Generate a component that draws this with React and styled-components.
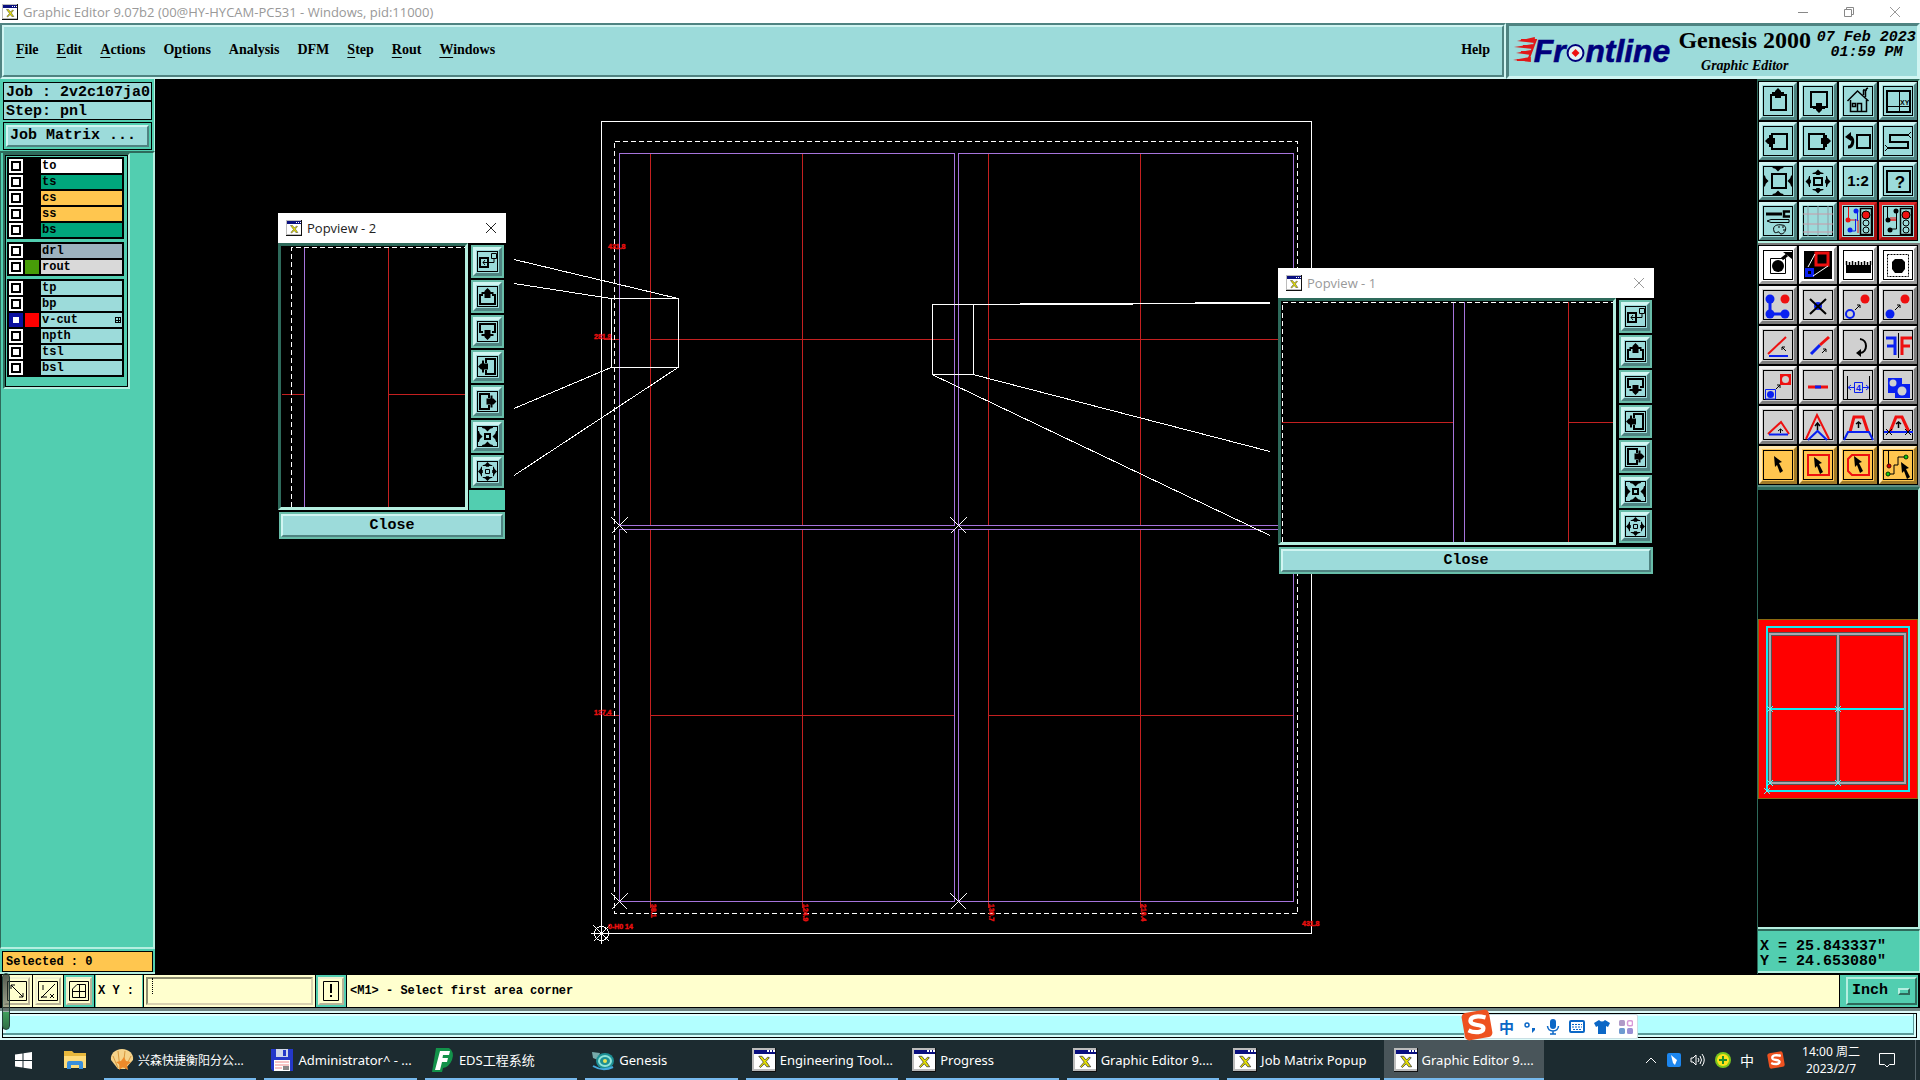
import React from "react";
import styled, { createGlobalStyle, css } from "styled-components";

const c = {
  teal: "#9cdbda",
  tealLight: "#d0f5f2",
  tealDark: "#4f8381",
  green: "#52ceb0",
  greenLight: "#b5efe0",
  greenDark: "#2e6a5b",
  cream: "#ffffce",
  amber: "#ffc64f",
  violet: "#a674dc",
  red: "#c42020",
  bar: "#1c2b30",
};
const mono = '"Liberation Mono", monospace';
const serif = '"Liberation Serif", serif';
const title = '"Open Sans", "Noto Sans", sans-serif';
const sans = '"Noto Sans", "Noto Sans CJK SC", sans-serif';

const Global = createGlobalStyle`
  *, *::before, *::after { box-sizing: border-box; }
  html, body { margin: 0; height: 100%; background: #000; overflow: hidden; }
  button, input, select { font: inherit; color: inherit; margin: 0; padding: 0; border: 0; border-radius: 0; background: none; }
  svg { display: block; }
`;

const raised = (w, light, dark) => css`
  border-style: solid;
  border-width: ${w}px;
  border-color: ${light} ${dark} ${dark} ${light};
`;

const Screen = styled.div`
  position: relative;
  display: grid;
  grid-template-rows: 23px 56px minmax(0, 1fr) 34px 32px 40px;
  height: 100vh;
  font-family: ${mono};
  color: #000;
`;

/* ---------- title bar ---------- */
const TitleBar = styled.header`
  display: flex;
  align-items: center;
  gap: 5px;
  padding: 0 19px 0 2px;
  background: #fff;
  color: #999;
  font: 13px/22px ${title};
`;
const Grow = styled.span`
  flex: 1;
`;
const WinButtons = styled.div`
  display: flex;
  gap: 34px;
`;
const Plain = styled.button`
  display: flex;
  align-items: center;
  justify-content: center;
`;

/* ---------- menu ---------- */
const TopRow = styled.div`
  display: flex;
  background: ${c.teal};
`;
const MenuFrame = styled.nav`
  flex: 1;
  display: flex;
  ${raised(2, c.tealDark, c.tealLight)}
`;
const MenuInner = styled.div`
  flex: 1;
  display: flex;
  align-items: center;
  gap: 18px;
  padding: 0 12px 2px 12px;
  ${raised(2, c.tealLight, c.tealDark)}
`;
const MenuItem = styled.button`
  font: bold 14px/20px ${serif};
  u { text-underline-offset: 3px; text-decoration-thickness: 1px; }
`;
const Brand = styled.div`
  width: 414px;
  display: flex;
  gap: 4px;
  padding-left: 4px;
  border-style: solid;
  border-width: 3px;
  border-color: ${c.tealDark} ${c.tealLight} ${c.tealLight} ${c.tealDark};
`;
const Product = styled.div`
  width: 135px;
  text-align: center;
  white-space: nowrap;
  font: bold 24px/28px ${serif};
  em { display: block; font-size: 14px; line-height: 24px; }
`;
const Clock = styled.time`
  width: 102px;
  text-align: center;
  font: italic bold 15px/15px ${mono};
  padding-top: 4px;
  white-space: nowrap;
`;

/* ---------- main area ---------- */
const Main = styled.main`
  display: flex;
  min-height: 0;
`;
const Sidebar = styled.aside`
  width: 155px;
  display: flex;
  flex-direction: column;
  background: ${c.green};
  border-bottom: 2px solid ${c.greenLight};
`;
const JobInfo = styled.div`
  padding: 3px 2px 1px 3px;
  border-right: 1px solid ${c.greenLight};
`;
const JobLine = styled.div`
  height: 19px;
  padding-left: 2px;
  border: 1px solid #000;
  background: ${c.teal};
  font: bold 15px/19px ${mono};
  white-space: pre;
`;
const MatrixFrame = styled.div`
  margin-top: 2px;
  padding: 2px;
  border: 1px solid #000;
`;
const MatrixButton = styled.button`
  width: 100%;
  height: 22px;
  padding-left: 2px;
  text-align: left;
  background: ${c.teal};
  font: bold 15px/18px ${mono};
  ${raised(2, c.tealLight, c.tealDark)}
`;
const LayerArea = styled.div`
  flex: 1;
  padding-left: 2px;
  border-right: 2px solid ${c.greenLight};
  border-bottom: 2px solid ${c.greenLight};
  border-left: 1px solid ${c.greenDark};
  border-top: 2px solid ${c.greenDark};
`;
const LayerBox = styled.div`
  width: 127px;
  ${raised(2, c.greenDark, c.greenLight)}
`;
const LayerList = styled.div`
  display: flex;
  flex-direction: column;
  gap: 3px;
  padding: 1px 3px 9px 1px;
  border: 1px solid #000;
`;
const LayerGroup = styled.div`
  padding: 1px;
  background: #000;
`;
const LayerRow = styled.div`
  display: grid;
  grid-template-columns: 14px 14px 1fr;
  column-gap: 2px;
  height: 16px;
  padding: 1px;
`;
const Tick = styled.input`
  appearance: none;
  width: 14px;
  height: 14px;
  border: 2px solid ${(p) => (p.$active ? "#0c10a0" : "#fff")};
  background: #fff;
  box-shadow: inset 0 0 0 2px ${(p) => (p.$active ? "#0c10a0" : "#000")};
`;
const Swatch = styled.span`
  background: ${(p) => p.$color || "#000"};
`;
const LayerName = styled.label`
  display: flex;
  align-items: center;
  justify-content: space-between;
  padding: 0 1px;
  background: ${(p) => p.$color};
  font: bold 12px/14px ${mono};
`;
const Selected = styled.div`
  height: 21px;
  margin: 2px 2px 0;
  padding-left: 3px;
  border: 1px solid #000;
  background: ${c.amber};
  font: bold 12px/20px ${mono};
`;

const Canvas = styled.section`
  position: relative;
  flex: 1;
  min-width: 0;
  background: #000;
  overflow: hidden;
  > svg { width: 100%; height: 100%; }
`;

/* ---------- pop-up views ---------- */
const Popup = styled.div`
  position: absolute;
  left: ${(p) => p.$x}px;
  top: ${(p) => p.$y}px;
  width: ${(p) => p.$w}px;
  background: #000;
`;
const PopTitle = styled.div`
  display: flex;
  align-items: center;
  gap: 5px;
  height: 30px;
  padding: 0 9px 0 8px;
  background: #fff;
  color: ${(p) => (p.$dim ? "#999" : "#222")};
  font: 13px/28px ${title};
`;
const PopBody = styled.div`
  display: flex;
  gap: 1px;
  padding-right: 1px;
`;
const PopView = styled.div`
  flex: 1;
  ${raised(3, c.greenDark, c.greenLight)}
  svg { width: 100%; height: 100%; }
`;
const PopTools = styled.div`
  width: 36px;
  display: flex;
  flex-direction: column;
  align-items: center;
  gap: 2px;
  padding-top: 2px;
`;
const PopTool = styled.button`
  width: 33px;
  height: 33px;
  background: ${c.teal};
  border: 2px solid #68bda9;
  > span { display: block; ${raised(3, c.tealLight, c.tealDark)} }
`;
const PopFill = styled.span`
  flex: 1;
  align-self: stretch;
  background: ${c.green};
`;
const CloseFrame = styled.div`
  margin: 2px 1px 0;
  padding: 2px;
  background: #68bda9;
`;
const CloseButton = styled.button`
  display: block;
  width: 100%;
  height: 23px;
  background: ${c.teal};
  font: bold 15px/19px ${mono};
  ${raised(2, c.tealLight, c.tealDark)}
`;

/* ---------- right column ---------- */
const RightCol = styled.aside`
  width: 163px;
  display: flex;
  flex-direction: column;
  background: #000;
  border-left: 1px solid ${c.greenDark};
`;
const ToolPanel = styled.div`
  display: grid;
  grid-template-columns: repeat(4, 40px);
  grid-auto-rows: 40px;
  background: #000;
  border-top: 2px solid ${(p) => (p.$grey ? "#777" : c.greenDark)};
  border-right: 2px solid ${(p) => (p.$grey ? "#888" : c.greenLight)};
  border-bottom: 2px solid ${(p) => (p.$grey ? "#5d8f84" : c.greenLight)};
`;
const kinds = {
  teal: [c.teal, c.tealLight, c.tealDark],
  red: [c.teal, "#e02a2a", "#a31212"],
  white: ["#fff", "#fff", "#9a9a9a"],
  grey: ["#d0d0d0", "#f2f2f2", "#7d7d7d"],
  amber: [c.amber, "#ffe7b0", "#a07a28"],
};
const Tool = styled.button`
  width: 38px;
  height: 38px;
  margin: 1px;
  background: ${(p) => kinds[p.$kind][0]};
  border-style: solid;
  border-width: 3px;
  border-color: ${(p) => {
    const [, l, d] = kinds[p.$kind];
    return `${l} ${d} ${d} ${l}`;
  }};
`;
const MiniMap = styled.div`
  flex: 1;
  display: flex;
  align-items: center;
  border-style: solid;
  border-width: 3px 2px 2px 0;
  border-color: ${c.greenDark} ${c.greenLight} ${c.greenLight};
  svg { width: 100%; }
`;
const Coords = styled.div`
  height: 44px;
  margin-bottom: 1px;
  padding: 8px 2px 0;
  background: ${c.green};
  border-top: 2px solid ${c.greenDark};
  border-right: 1px solid ${c.greenLight};
  border-bottom: 2px solid ${c.greenLight};
  font: bold 15px/15px ${mono};
  white-space: pre;
`;

/* ---------- command line ---------- */
const Command = styled.form`
  display: flex;
  gap: 1px;
  padding: 1px 2px 1px 2px;
  font: bold 12px/33px ${mono};
`;
const CmdButton = styled.button`
  width: 30px;
  padding: 2px;
  background: ${(p) => (p.$framed ? c.green : c.cream)};
  > span {
    display: flex;
    align-items: center;
    justify-content: center;
    height: 28px;
    background: ${c.cream};
    ${raised(2, "#f0f0d0", "#b9b398")}
  }
`;
const CmdLabel = styled.label`
  width: 48px;
  padding-left: 2px;
  background: ${c.cream};
  border-left: 1px solid ${c.green};
  border-right: 1px solid ${c.green};
  white-space: pre;
`;
const CmdField = styled.div`
  width: 171px;
  padding: 2px;
  background: ${c.cream};
`;
const CmdInput = styled.input`
  display: block;
  width: 100%;
  height: 28px;
  padding-left: 5px;
  ${raised(2, "#8d8d70", "#d9d2b0")}
`;
const Caret = styled.span`
  position: absolute;
  left: 152px;
  bottom: 86px;
  height: 16px;
  border-left: 1px dotted #000;
`;
const Message = styled.output`
  flex: 1;
  padding-left: 3px;
  background: ${c.cream};
`;
const UnitBox = styled.div`
  display: flex;
  width: 78px;
  padding: 2px 1px 2px 6px;
  background: ${c.green};
`;
const UnitInner = styled.div`
  flex: 1;
  display: flex;
  align-items: center;
  gap: 2px;
  padding-left: 4px;
  ${raised(2, c.greenLight, c.greenDark)}
`;
const UnitSelect = styled.select`
  appearance: none;
  width: 44px;
  font: bold 15px/20px ${mono};
`;
const UnitMark = styled.span`
  width: 12px;
  height: 7px;
  ${raised(2, c.greenLight, c.greenDark)}
`;

const Strip = styled.div`
  padding: 2px 3px 2px 2px;
  background: #dffcfa;
  border-top: 3px solid #6f8583;
`;
const StripInner = styled.div`
  height: 100%;
  border: 1px solid #000;
  background: #b2ffff;
  box-shadow: inset -2px 0 0 #d8fffc, inset 0 -2px 0 #d8fffc, inset -3px -4px 0 #5b9a98, inset 3px 2px 0 #e0ffff;
`;
const Gauge = styled.div`
  position: absolute;
  left: 2px;
  bottom: 50px;
  width: 8px;
  height: 57px;
  border: 1px solid #24413a;
  border-radius: 4px;
  background: linear-gradient(rgba(30, 40, 36, 0.75), rgba(90, 100, 90, 0.5) 38px, #3f9f5c 38px, #2f6f45);
`;

/* ---------- input method bar ---------- */
const Ime = styled.div`
  position: absolute;
  right: 282px;
  bottom: 41px;
  width: 174px;
  height: 25px;
  display: flex;
  align-items: center;
  gap: 9px;
  padding-left: 34px;
  background: #fff;
  border: 1px solid #c9dfe4;
  border-radius: 2px;
  color: #0b67c6;
  font: bold 15px/22px "Noto Sans CJK SC", sans-serif;
`;
const ImeLogo = styled.span`
  position: absolute;
  left: -4px;
  bottom: -3px;
`;

/* ---------- taskbar ---------- */
const Taskbar = styled.footer`
  display: flex;
  align-items: stretch;
  background: ${c.bar};
  color: #fff;
  font: 13px/39px ${sans};
`;
const Launch = styled.div`
  width: 100px;
  display: flex;
  align-items: center;
  gap: 32px;
  padding-left: 15px;
`;
const Tasks = styled.div`
  flex: 0 1 1444px;
  display: grid;
  grid-template-columns: repeat(9, minmax(0, 1fr));
`;
const Task = styled.button`
  position: relative;
  display: flex;
  align-items: center;
  gap: 4px;
  padding-left: 10px;
  white-space: nowrap;
  font-size: ${(p) => (p.$compact ? 12 : 13)}px;
  background: ${(p) => (p.$active ? "#49555a" : "transparent")};
  &::after {
    content: "";
    position: absolute;
    left: ${(p) => (p.$active ? 0 : 4)}px;
    right: ${(p) => (p.$active ? 0 : 4)}px;
    bottom: 0;
    height: 2px;
    background: #76b9ed;
  }
`;
const Tray = styled.div`
  flex: 1;
  display: flex;
  align-items: center;
  justify-content: flex-end;
  gap: 9px;
  padding-right: 20px;
  border-right: 1px solid #55636a;
  margin-right: 4px;
`;
const TrayText = styled.span`
  margin-right: 4px;
  font: 14px/20px "Noto Sans CJK SC", sans-serif;
`;
const DateTime = styled.time`
  width: 74px;
  margin-right: 2px;
  text-align: center;
  font: 12px/17px ${sans};
`;

/* ---------- icons ---------- */
function AppIcon({ size = 16 }) {
  return (
    <svg width={size} height={size} viewBox="0 0 16 16" shapeRendering="crispEdges">
      <rect width="16" height="16" fill="#111" />
      <rect width="15" height="15" fill="#bcbcbc" />
      <rect x="1" y="1" width="14" height="3" fill="#0a1080" />
      <path d="M10 2h1M12 2h1M14 2h1" stroke="#fff" />
      <rect x="1" y="4" width="14" height="10" fill="#fff" />
      <path d="M4.500 5.500h2l2 2.500 2-2 1 .5-2.200 2.500 2.500 3.500h-2l-1.600-2-2.500 2.500-.8-.6 2.600-3z" fill="#e8e200" stroke="#333" strokeWidth=".5" shapeRendering="auto" />
    </svg>
  );
}

const Head = ({ x, y, r = 0, s = 1 }) => (
  <path d="M0-5L3-2L6-1V0H2V1H-2V0H-6V-1L-3-2z" fill="#000" transform={`translate(${x} ${y}) rotate(${r}) scale(${s})`} />
);
const Arrow = ({ x, y, r = 0 }) => (
  <path d="M0-5L3-2V-1H6V1H3V5H-3V1H-6V-1H-3V-2z" fill="#000" transform={`translate(${x} ${y}) rotate(${r})`} />
);
const line = (d, stroke = "#000", w = 2) => <path d={d} stroke={stroke} strokeWidth={w} fill="none" />;
const B = "#0a20f0";
const R = "#ee1010";
const pointer = (x, y) => (
  <path d="M0 0L8 6 5 7 9 15 6 17 3 9 1 11z" fill="#000" transform={`translate(${x} ${y})`} />
);

const lights = (
  <>
    {line("M18.500 3.500H29.500V29.500H18.500z", "#000", 1.5)}
    <circle cx="24" cy="10" r="4" fill={R} stroke="#000" />
    <circle cx="24" cy="18" r="3" fill="none" stroke="#000" />
    <circle cx="24" cy="25" r="3" fill="none" stroke="#000" />
  </>
);

const icons = {
  up: <>{line("M9 10H24V25H9z")}<Arrow x={16} y={8} /></>,
  down: <>{line("M9 7H25V22H9z")}<Arrow x={17} y={23} r={180} /></>,
  home: (
    <>
      {line("M5.500 16L15.500 6L26.500 16M21.500 10V5M23.500 12V5M21 5H25M24 4L26 3", "#000", 1.5)}
      {line("M8.500 15V26.500H24.500V15M15.500 26V18.500H19.500V26M10.500 18.500H13.500V21.500H10.500z", "#000", 1.5)}
    </>
  ),
  xy: (
    <>
      {line("M5 6H28V27H5z")}
      {line("M17.500 6V27M5 21.500H28", "#000", 1)}
      <text x="18" y="20" fontSize="7" fontWeight="bold" fontFamily="Liberation Sans, sans-serif">XY</text>
    </>
  ),
  left: <>{line("M10 9H25V24H10z")}<Arrow x={8} y={16} r={270} /></>,
  right: <>{line("M7 9H22V24H7z")}<Arrow x={24} y={16} r={90} /></>,
  undo: <>{line("M15 10H28V23H15z")}{line("M6 12H8C12 12 12 22 6 22", "#000", 3)}<path d="M3 12L9 7V16z" /></>,
  snake: <>{line("M26 10H8V17H26V23H6")}{line("M26 10L29 7M26 10L29 13M6 23L3 20M6 23L3 26", "#000", 1)}</>,
  zin: <>{line("M10 9H24V23H10z")}<Head x={16} y={2} r={180} s={0.9} /><Head x={16} y={30} s={0.9} /><Head x={2} y={16} r={90} s={0.9} /><Head x={30} y={16} r={270} s={0.9} /></>,
  zout: <>{line("M12 13H20V20H12z")}<Head x={16} y={9} s={0.9} /><Head x={16} y={24} r={180} s={0.9} /><Head x={8} y={16.5} r={270} s={0.9} /><Head x={24} y={16.5} r={90} s={0.9} /></>,
  ratio: <text x="16" y="21" textAnchor="middle" fontSize="15" fontWeight="bold" fontFamily="Liberation Sans, sans-serif">1:2</text>,
  help: <>{line("M5 6H28V27H5z")}<text x="18" y="23" textAnchor="middle" fontSize="17" fontFamily="Liberation Sans, sans-serif" fontWeight="bold">?</text></>,
  setup: (
    <>
      {line("M4 9H20", "#000", 3)}
      {line("M28 6.500H22V11.500H28", "#000", 2.5)}
      {line("M5 16L9 14.500H27V17.500H9z", "#000", 1)}
      {line("M12 26C10 21 15 19 20 20C26 20 24 29 19 29C17 29 18 26 16 27C14 28 12 28 12 26M16 22h2M20 22h2M21 25h2", "#000", 1)}
    </>
  ),
  grid: <>{line("M6 1V31M16 1V31M26 1V31", "#8a9fa8", 1)}{line("M1 9H31M1 19H31M1 27H31", "#c99aa8", 1)}</>,
  light1: (
    <>
      {line("M6.500 2V15H16V28", R, 1)}{line("M15.500 6V16M9 26H13.500V14", B, 1)}
      <circle cx="6" cy="15" r="2.500" fill={R} /><circle cx="14" cy="6" r="2.500" fill={B} /><circle cx="8" cy="25" r="2.500" fill={B} />
      {lights}
    </>
  ),
  light2: (
    <>
      {line("M5.500 2V14M14.500 6V24H8", "#000", 1)}{line("M6 15H14M9 12V16M11 12V16M13 12V16", R, 1)}
      <circle cx="6" cy="15" r="2.500" /><circle cx="14" cy="6" r="2.500" /><circle cx="8" cy="25" r="2.500" />
      {lights}
    </>
  ),
  movePad: <>{line("M8.500 9.500H23.500V24.500H8.500z", "#000", 1)}<circle cx="16" cy="17" r="6" />{line("M20 10L25 6", "#000", 3)}<path d="M21 3H30V10z" /></>,
  resize: (
    <>
      <rect x="2" y="2" width="28" height="28" /><path d="M14 4H26V16H14z" stroke={R} strokeWidth="3" fill="none" />
      <path d="M4 20H11V27H4z" stroke={B} strokeWidth="2" fill={B} />{line("M6 18L13 5M11 27L26 17", "#fff", 1)}<rect x="6" y="22" width="3" height="3" />
    </>
  ),
  ruler: <><rect x="4" y="16" width="25" height="8" />{line("M4.500 12V16M7.500 13V16M10.500 12V16M13.500 13V16M16.500 12V16M19.500 13V16M22.500 12V16M25.500 13V16M28.500 12V16", "#000", 1.5)}</>,
  spot: <><path d="M5.500 5.500H26.500V27.500H5.500z" fill="none" stroke="#000" strokeDasharray="2 1" /><path d="M13 10H20L23 13V20L20 24H13L10 20V13z" /></>,
  nodes: <>{line("M8 10V25H23", B, 3)}<circle cx="8" cy="10" r="4.500" fill={B} /><circle cx="8" cy="25" r="4.500" fill={B} /><circle cx="23" cy="25" r="4.500" fill={B} /><circle cx="23" cy="10" r="4.500" fill={R} /></>,
  kill: <><circle cx="16" cy="17" r="4" fill={B} />{line("M8 10L24 25M24 10L8 25")}</>,
  copyTo: <><circle cx="8" cy="25" r="4" fill="none" stroke={B} strokeWidth="2" /><circle cx="23" cy="10" r="4.500" fill={R} />{line("M13 21L18 16M15 16H18V19", "#000", 1)}</>,
  moveTo: <><circle cx="8" cy="25" r="4.500" fill={B} /><circle cx="23" cy="10" r="4.500" fill={R} />{line("M13 21L18 16M15 16H18V19", "#000", 1)}</>,
  angle: <>{line("M6 25L24 8", R)}{line("M7 27H26", B)}{line("M24 22L20 18M20 21V18H23", "#000", 1)}</>,
  extend: <>{line("M9 25L18 16", B, 3)}{line("M18 16L27 8", R, 3)}{line("M20 24L24 20M21 20H24V23", "#000", 1)}</>,
  rotate: <>{line("M18 10C26 11 26 23 18 24")}<path d="M14 24L19 20V28z" /></>,
  mirror: <>{line("M4 9H13V26M13 17H5", B, 3)}{line("M30 9H20V26M20 17H28", R, 3)}{line("M16.500 4V29", "#000", 1)}</>,
  swap: <>{line("M3.500 20.500H13.500V30H3.500z", B, 1)}<circle cx="8.500" cy="25.500" r="3.500" fill={B} />{line("M14 20L18 16M15 16H18V19", "#000", 1)}<rect x="18" y="5" width="11" height="11" fill={R} /><circle cx="23.500" cy="10.500" r="3.500" fill="#d0d0d0" /></>,
  brk: <>{line("M6 18H26", R, 3)}{line("M13 18H19", B, 3)}</>,
  measure: <>{line("M5.500 7V30M27.500 7V30", "#000", 1)}{line("M12.500 13.500H20.500V23.500H12.500zM7 18.500H12M20 18.500H26M9 16L6 18.500L9 21M24 16L27 18.500L24 21", B, 1)}<text x="14" y="22" fontSize="9" fontWeight="bold" fill={B} fontFamily="Liberation Sans, sans-serif">4</text></>,
  merge: <><path d="M6 9H20V15H28V29H13V24H6z" fill={B} /><circle cx="11" cy="14" r="3.500" fill="#d0d0d0" /><circle cx="20" cy="22" r="4.500" fill="#d0d0d0" /></>,
  tri1: <>{line("M6 25L19 13L27 25", R)}{line("M7 25.500H26", B)}{line("M18.500 24V20M16 22L18.500 20L21 22", "#000", 1)}</>,
  tri2: <>{line("M4 30L15 6L27 30", R)}{line("M6 31L15.500 22L25 31", B)}{line("M15.500 21V14M13 17L15.500 14L18 17", "#000", 1.5)}</>,
  trap1: <>{line("M8 23L12 8H21L26 23", R, 3)}{line("M2 31L6 23H27L31 31", B)}{line("M16.500 19V13M14 15L16.500 13L19 15", "#000", 1.5)}</>,
  trap2: <>{line("M8 23L14 8H20L27 23", R, 3)}{line("M2 23H31", B)}{line("M16.500 19V13M14 15L16.500 13L19 15", "#000", 1.5)}{line("M4 20L10 26M10 20L4 26M23 20L29 26M29 20L23 26", "#000", 1)}</>,
  sel: pointer(12, 7),
  selRect: <>{line("M6 6H27V26H6z", R)}{pointer(12, 8)}</>,
  selPoly: <>{line("M10 6H27V26H10L6 22V10z", R)}{pointer(12, 7)}</>,
  selNet: (
    <>
      {line("M6.500 1V17M6 25H12V16H16V8H24", "#000", 1)}
      <circle cx="7" cy="17" r="2" fill="#c00" stroke="#500" /><circle cx="6" cy="25" r="2" fill="#1c1" stroke="#030" /><circle cx="24" cy="8" r="2" fill="#1c1" stroke="#030" />
      {pointer(19, 13)}
    </>
  ),
};
function ToolIcon({ name }) {
  return (
    <svg width="32" height="32" viewBox="0 0 32 32">
      {name !== "resize" && <path d="M1.500 1.500H30.500V30.500H1.500z" fill="none" stroke="#000" shapeRendering="crispEdges" />}
      {icons[name]}
    </svg>
  );
}
const upper = [
  ["up", "Pan up"], ["down", "Pan down"], ["home", "Home"], ["xy", "Zoom XY"],
  ["left", "Pan left"], ["right", "Pan right"], ["undo", "Previous view"], ["snake", "Serpentine"],
  ["zin", "Zoom in"], ["zout", "Zoom out"], ["ratio", "Scale"], ["help", "Query"],
  ["setup", "Setup"], ["grid", "Grid"], ["light1", "Net check", "red"], ["light2", "Net rules", "red"],
];
const lower = [
  ["movePad", "Move pad", "white"], ["resize", "Popview", "white"], ["ruler", "Measure", "white"], ["spot", "Snap", "white"],
  ["nodes", "Nodes"], ["kill", "Delete"], ["copyTo", "Copy"], ["moveTo", "Move"],
  ["angle", "Angle"], ["extend", "Extend"], ["rotate", "Rotate"], ["mirror", "Mirror"],
  ["swap", "Change symbol"], ["brk", "Break"], ["measure", "Distance"], ["merge", "Merge"],
  ["tri1", "Move line"], ["tri2", "Move corner"], ["trap1", "Stretch"], ["trap2", "Stretch fixed"],
  ["sel", "Select", "amber"], ["selRect", "Select frame", "amber"], ["selPoly", "Select polygon", "amber"], ["selNet", "Select net", "amber"],
];

const smallIcons = {
  pick: <>{line("M4 8H12V17H4z")}{line("M15.500 3.500H20.500V8.500H15.500zM7 12.500H18V8M9 10L7 12.500L9 15", "#000", 1)}</>,
  up: <>{line("M7 10H4V19H19V10H16")}<Arrow x={11.5} y={8} /></>,
  down: <>{line("M7 12H4V4H19V12H16")}<Arrow x={11.5} y={15} r={180} /></>,
  left: <>{line("M10 8V4H19V19H10V15")}<Arrow x={7} y={11.5} r={270} /></>,
  right: <>{line("M13 8V4H4V19H13V15")}<Arrow x={15.5} y={11.5} r={90} /></>,
  zin: <>{line("M9 9H14V14H9z")}<Head x={11.5} y={2} r={180} s={0.9} /><Head x={11.5} y={21} s={0.9} /><Head x={2} y={11.5} r={90} s={0.9} /><Head x={21} y={11.5} r={270} s={0.9} /></>,
  zout: <>{line("M9.500 9.500H13.500V13.500H9.500z", "#000", 1)}<Head x={11.5} y={6} s={0.8} /><Head x={11.5} y={17} r={180} s={0.8} /><Head x={6} y={11.5} r={270} s={0.8} /><Head x={17} y={11.5} r={90} s={0.8} /></>,
};

const CloseGlyph = () => (
  <svg width="12" height="12" viewBox="0 0 12 12"><path d="M1 1L11 11M11 1L1 11" stroke="currentColor" /></svg>
);

function PopWindow({ id, x, y, w, h, dim, drawing }) {
  return (
    <Popup $x={x} $y={y} $w={w} role="dialog" aria-label={`Popview - ${id}`}>
      <PopTitle $dim={dim}>
        <AppIcon />
        <span>Popview - {id}</span>
        <Grow />
        <Plain aria-label="Close window"><CloseGlyph /></Plain>
      </PopTitle>
      <PopBody>
        <PopView>
          <svg viewBox={`0 0 ${w - 44} ${h}`} shapeRendering="crispEdges">{drawing}</svg>
        </PopView>
        <PopTools>
          {Object.keys(smallIcons).map((k) => (
            <PopTool key={k} aria-label={k}>
              <span>
                <svg width="23" height="23" viewBox="0 0 23 23">
                  <path d="M1.500 1.500H21.500V21.500H1.500z" fill="none" stroke="#000" shapeRendering="crispEdges" />
                  {smallIcons[k]}
                </svg>
              </span>
            </PopTool>
          ))}
          {id === 2 && <PopFill />}
        </PopTools>
      </PopBody>
      <CloseFrame><CloseButton>Close</CloseButton></CloseFrame>
    </Popup>
  );
}

function Panel() {
  const v = { stroke: c.violet, fill: "none" };
  const r = { stroke: c.red, fill: "none" };
  const w = { stroke: "#fff", fill: "none" };
  const cross = (x, y) => <path d={`M${x - 8} ${y - 8}L${x + 8} ${y + 8}M${x + 8} ${y - 8}L${x - 8} ${y + 8}`} {...w} />;
  const tag = (x, y, t, rot) => (
    <text transform={`translate(${x} ${y})${rot ? " rotate(90)" : ""}`} fontSize="7" fontWeight="bold" fontFamily="Liberation Sans, sans-serif" fill="#ff1010" stroke="#e01010" strokeWidth=".4">{t}</text>
  );
  return (
    <svg viewBox="155 79 1602 895" shapeRendering="crispEdges">
      <path d="M650.500 153V525M650.500 529V908M802.500 153V525M802.500 529V908M988.500 153V525M988.500 529V908M1140.500 153V525M1140.500 529V908" {...r} />
      <path d="M650 339.500H954M988 339.500H1293M650 715.500H954M988 715.500H1293M604 339.500H619M604 715.500H619" {...r} />
      <path d="M619.500 153.500H954.500V525.500H619.500zM958.500 153.500H1293.500V525.500H958.500zM619.500 529.500H954.500V901.500H619.500zM958.500 529.500H1293.500V901.500H958.500z" {...v} />
      <path d="M601.500 121.500H1311.500V933.500H601.500z" {...w} />
      <path d="M614.500 141.500H1297.500V913.500H614.500z" strokeDasharray="5 3" {...w} />
      <path d="M611.500 298.500H678.500V367.500H611.500zM932.500 304.500H973.500V374.500H932.500z" {...w} />
      <path d="M514 259.500L678 298.500M514 283.500L611 298.500M514 408.500L611 367.500M514 475.500L678 367.500" {...w} />
      <path d="M973 304.500H1133M1020 303.500H1270M1195 302.500H1270M932 374.500L1270 535.500M973 374.500L1270 451.500" {...w} />
      {cross(619.5, 525.5)}{cross(958.5, 525.5)}{cross(619.5, 901.5)}{cross(958.5, 901.5)}
      {cross(601.5, 933.5)}
      <circle cx="601.500" cy="933.500" r="7" {...w} />
      <path d="M591 933.500H611M601.500 923V944" {...w} />
      {tag(608, 249, "431.8")}{tag(594, 339, "281.9")}{tag(594, 715, "137.4")}
      {tag(608, 929, "0-H0 14")}{tag(1302, 926, "431.8")}
      {tag(651, 904, "38.1", 1)}{tag(803, 904, "124.9", 1)}{tag(989, 904, "130.7", 1)}{tag(1141, 904, "216.4", 1)}
    </svg>
  );
}

const layers = [
  [["to", "#fff"], ["ts", "#00a67c"], ["cs", c.amber], ["ss", c.amber], ["bs", "#00a67c"]],
  [["drl", "#9db3be"], ["rout", "#d9d9d9", "#479c08"]],
  [["tp", c.teal], ["bp", c.teal], ["v-cut", c.teal, "#ff0000"], ["npth", c.teal], ["tsl", c.teal], ["bsl", c.teal]],
];

const menus = ["_File", "_Edit", "_Actions", "O_ptions", "Analysis", "DFM", "_Step", "_Rout", "_Windows"];
const MenuText = ({ t }) => {
  const i = t.indexOf("_");
  if (i < 0) return t;
  return <>{t.slice(0, i)}<u>{t[i + 1]}</u>{t.slice(i + 2)}</>;
};

function Logo() {
  return (
    <svg width="162" height="48" viewBox="0 0 162 48">
      <path d="M4 15L22 11V17zM1 21L20 18V23zM3 27L18 24V29zM0 34L18 31V36z" fill="#e01818" />
      <path d="M8 14H23L15 35M10 20H20M8 26H18M4 34H16" stroke="#e01818" strokeWidth="2" fill="none" />
      <g fill="#00007c" stroke="#00007c" strokeWidth=".6" fontFamily="Liberation Sans, sans-serif" fontWeight="bold" fontStyle="italic" fontSize="32">
        <text x="21" y="36">Fr</text>
        <text x="73" y="36">ntline</text>
      </g>
      <circle cx="63" cy="27" r="8" fill="#e4f4f4" stroke="#00007c" strokeWidth="2" />
      <path d="M63 23L67 27L63 31L59 27z" fill="#ee1010" />
    </svg>
  );
}

const SogouS = ({ size }) => (
  <svg width={size} height={size} viewBox="0 0 30 30">
    <rect x="2" y="2" width="26" height="26" rx="4" fill="#ee5220" transform="rotate(-10 15 15)" />
    <path d="M23 8C15 6 8 7 9 12C10 16 21 14 21 18C21 22 13 23 7 20" stroke="#fff" strokeWidth="4" fill="none" />
  </svg>
);

const taskIcons = {
  shell: (
    <svg width="24" height="24" viewBox="0 0 24 24">
      <path d="M12 1C19 1 24 6 23 12L15 21H8L1 12C0 6 5 1 12 1z" fill="#f6d389" />
      <path d="M8 20L3 8M10 20L8 3M13 20L15 3M15 20L21 8" stroke="#d79a40" fill="none" />
      <path d="M14 9L16 13L21 14L17 17L18 22L13 19L9 22L10 17L6 14L11 13z" fill="#ee8a2a" />
    </svg>
  ),
  floppy: (
    <svg width="24" height="24" viewBox="0 0 24 24">
      <path d="M1 1H23V23H3L1 21z" fill="#2438c8" /><rect x="6" y="1" width="12" height="8" fill="#cfd6ea" /><rect x="13" y="2" width="3" height="6" fill="#2438c8" />
      <rect x="4" y="12" width="16" height="11" fill="#fff" /><path d="M5 14H19M5 17H19M5 20H12" stroke="#e88" /><rect x="13" y="18" width="6" height="4" fill="#888" />
    </svg>
  ),
  f: (
    <svg width="24" height="24" viewBox="0 0 24 24">
      <path d="M5 0H18Q24 4 21 12Q18 19 12 20L11 24H1z" fill="#13924a" />
      <path d="M9 3H19L18 7H12L11.500 10H17L16 14H11L9 22H4z" fill="#fff" />
    </svg>
  ),
  genesis: (
    <svg width="24" height="24" viewBox="0 0 24 24">
      <path d="M1 4L9 5L7 12L2 10z" fill="#7aa" /><ellipse cx="14" cy="13" rx="9" ry="8" fill="#1d8f94" />
      <ellipse cx="14" cy="13" rx="6" ry="5" fill="none" stroke="#8fe3d8" strokeWidth="2" /><circle cx="14" cy="13" r="2" fill="#e5e25a" />
      <path d="M2 18Q12 24 22 19" stroke="#4ad" fill="none" strokeWidth="2" />
    </svg>
  ),
  x: <AppIcon size={24} />,
};
const tasks = [
  ["shell", "兴森快捷衡阳分公..."], ["floppy", "Administrator^ - ..."], ["f", "EDS工程系统"], ["genesis", "Genesis"],
  ["x", "Engineering Tool..."], ["x", "Progress"], ["x", "Graphic Editor 9...."], ["x", "Job Matrix Popup"], ["x", "Graphic Editor 9...."],
];

export default function App() {
  return (
    <Screen>
      <Global />
      <TitleBar>
        <AppIcon />
        <span>Graphic Editor 9.07b2 (00@HY-HYCAM-PC531 - Windows, pid:11000)</span>
        <Grow />
        <WinButtons>
          <Plain aria-label="Minimize"><svg width="12" height="12"><path d="M1 6.500H11" stroke="#888" /></svg></Plain>
          <Plain aria-label="Restore"><svg width="12" height="12"><path d="M1.500 3.500H8.500V10.500H1.500zM3.500 3V1.500H10.500V8.500H9" stroke="#888" fill="none" /></svg></Plain>
          <Plain aria-label="Close"><CloseGlyph /></Plain>
        </WinButtons>
      </TitleBar>

      <TopRow>
        <MenuFrame>
          <MenuInner>
            {menus.map((m) => <MenuItem key={m}><MenuText t={m} /></MenuItem>)}
            <Grow />
            <MenuItem>Help</MenuItem>
          </MenuInner>
        </MenuFrame>
        <Brand>
          <Logo />
          <Product>Genesis 2000<em>Graphic Editor</em></Product>
          <Clock>07 Feb 2023<br />01:59 PM</Clock>
        </Brand>
      </TopRow>

      <Main>
        <Sidebar>
          <JobInfo>
            <JobLine>Job : 2v2c107ja0</JobLine>
            <JobLine>Step: pnl</JobLine>
            <MatrixFrame><MatrixButton>Job Matrix ...</MatrixButton></MatrixFrame>
          </JobInfo>
          <LayerArea>
            <LayerBox>
              <LayerList>
                {layers.map((g, i) => (
                  <LayerGroup key={i}>
                    {g.map(([name, bg, sw]) => (
                      <LayerRow key={name}>
                        <Tick type="checkbox" id={`layer-${name}`} $active={name === "v-cut"} />
                        <Swatch $color={sw} />
                        <LayerName htmlFor={`layer-${name}`} $color={bg}>
                          {name}
                          {name === "v-cut" && <svg width="6" height="6" shapeRendering="crispEdges"><path d="M.5 .5H5.500V5.500H.5zM3 0V6M0 3H6" stroke="#000" fill="none" /></svg>}
                        </LayerName>
                      </LayerRow>
                    ))}
                  </LayerGroup>
                ))}
              </LayerList>
            </LayerBox>
          </LayerArea>
          <Selected>Selected : 0</Selected>
        </Sidebar>

        <Canvas aria-label="Panel drawing">
          <Panel />
          <PopWindow
            id={2} x={123} y={134} w={228} h={261}
            drawing={
              <>
                <path d="M107.500 1V261M1 148.500H23M107 148.500H184" stroke={c.red} />
                <path d="M23.500 1V261" stroke={c.violet} />
                <path d="M10.500 261V1.500H184" stroke="#fff" fill="none" strokeDasharray="5 3" />
              </>
            }
          />
          <PopWindow
            id={1} x={1123} y={189} w={376} h={241} dim
            drawing={
              <>
                <path d="M287.500 1V241M1 121.500H172M287 121.500H332" stroke={c.red} />
                <path d="M172.500 1V241M183.500 1V241" stroke={c.violet} />
                <path d="M1.500 241V1.500H332" stroke="#fff" fill="none" strokeDasharray="5 3" />
              </>
            }
          />
        </Canvas>

        <RightCol>
          <ToolPanel>
            {upper.map(([n, l, k = "teal"]) => <Tool key={n} aria-label={l} $kind={k}><ToolIcon name={n} /></Tool>)}
          </ToolPanel>
          <ToolPanel $grey>
            {lower.map(([n, l, k = "grey"]) => <Tool key={n} aria-label={l} $kind={k}><ToolIcon name={n} /></Tool>)}
          </ToolPanel>
          <MiniMap>
            <svg viewBox="0 0 160 180" shapeRendering="crispEdges">
              <rect x=".5" y=".5" width="159" height="179" fill="#f00" stroke="#8a6a10" />
              <path d="M12 15H147V164H12zM80 15V164" stroke="#555" strokeWidth="4" fill="none" />
              <path d="M12 15H147V164H12zM80 15V164" stroke="#a8a8b0" strokeWidth="2" fill="none" />
              <path d="M9 8H151V172H9zM11 90H147" stroke="#18e8f0" strokeWidth="2" fill="none" />
              <path d="M9 87L15 93M15 87L9 93M77 87L83 93M83 87L77 93M9 161L15 167M15 161L9 167M77 161L83 167M83 161L77 167M6 169L12 175M12 169L6 175" stroke="#5ff" />
            </svg>
          </MiniMap>
          <Coords>{'X = 25.843337"\nY = 24.653080"'}</Coords>
        </RightCol>
      </Main>

      <Command onSubmit={(e) => e.preventDefault()}>
        <CmdButton type="button" aria-label="Snap mode"><span><svg width="20" height="20" viewBox="0 0 20 20">{line("M.5 .5H19.500V19.500H.5zM4 4L16 16M4 8V4H8M12 16H16V12", "#000", 1)}</svg></span></CmdButton>
        <CmdButton type="button" aria-label="Angle mode"><span><svg width="20" height="20" viewBox="0 0 20 20">{line("M.5 .5H19.500V19.500H.5zM3 17L17 3M5 4V9M3 16H9M12 13L16 17M16 13L12 17", "#000", 1)}</svg></span></CmdButton>
        <CmdButton type="button" aria-label="Grid mode" $framed><span><svg width="20" height="20" viewBox="0 0 20 20">{line("M.5 .5H19.500V19.500H.5zM8 3.500H16.500V16.500H3.500V8L8 3.500zM10.500 3V17M3 10.500H17", "#000", 1)}</svg></span></CmdButton>
        <CmdLabel htmlFor="xy">X Y :</CmdLabel>
        <CmdField><CmdInput id="xy" /></CmdField>
        <CmdButton type="button" aria-label="Alert" $framed><span><svg width="20" height="20" viewBox="0 0 20 20">{line("M2.500 .5H17.500V19.500H2.500z", "#000", 1)}{line("M10 3V12M10 14V16")}</svg></span></CmdButton>
        <Message>{"<M1> - Select first area corner"}</Message>
        <UnitBox>
          <UnitInner>
            <UnitSelect aria-label="Unit" defaultValue="Inch"><option>Inch</option></UnitSelect>
            <UnitMark />
          </UnitInner>
        </UnitBox>
      </Command>

      <Strip><StripInner /></Strip>

      <Taskbar>
        <Launch>
          <Plain aria-label="Start"><svg width="17" height="17" viewBox="0 0 17 17" fill="#fff"><path d="M0 2.500L7.500 1.500V8H0zM8.500 1.300L17 0V8H8.500zM0 9H7.500V15.500L0 14.500zM8.500 9H17V17L8.500 15.700z" /></svg></Plain>
          <Plain aria-label="File Explorer">
            <svg width="22" height="18" viewBox="0 0 22 18"><path d="M0 0H8L10 2H22V17H0z" fill="#e8b83c" /><path d="M0 5H22V17H0z" fill="#ffdc7a" /><path d="M3 18V12Q3 10 5 10H17Q19 10 19 12V18H15V14H7V18z" fill="#3a8fdc" /></svg>
          </Plain>
        </Launch>
        <Tasks>
          {tasks.map(([icon, label], i) => (
            <Task key={i} $compact={icon === "shell"} $active={i === tasks.length - 1}>{taskIcons[icon]}<span>{label}</span></Task>
          ))}
        </Tasks>
        <Tray>
          <svg width="14" height="10" viewBox="0 0 14 10"><path d="M2 8L7 3L12 8" stroke="#fff" fill="none" /></svg>
          <svg width="14" height="14" viewBox="0 0 14 14"><rect width="14" height="14" rx="2" fill="#1c86ee" /><path d="M4 2L10 7L8 12L6 10z" fill="#fff" /></svg>
          <svg width="16" height="14" viewBox="0 0 16 14"><path d="M1 5H3L6 2V12L3 9H1zM8 5Q10 7 8 9M10 3Q13 7 10 11M12 1Q16.500 7 12 13" stroke="#fff" fill="none" /></svg>
          <svg width="16" height="16" viewBox="0 0 16 16"><circle cx="8" cy="8" r="8" fill="#7ac61e" /><circle cx="8" cy="8" r="6" fill="#ffe21a" /><path d="M8 4V12M4 8H12" stroke="#1d8f2a" strokeWidth="2" /></svg>
          <TrayText>中</TrayText>
          <SogouS size={18} />
          <DateTime>14:00 周二<br />2023/2/7</DateTime>
          <svg width="16" height="16" viewBox="0 0 16 16"><path d="M.5 1.500H15.500V12.500H10.500L8 15L5.500 12.500H.5z" stroke="#fff" fill="none" /></svg>
        </Tray>
      </Taskbar>

      <Gauge />
      <Caret />
      <Ime>
        <ImeLogo><SogouS size={32} /></ImeLogo>
        <span>中</span>
        <svg width="14" height="14" viewBox="0 0 14 14"><circle cx="4" cy="5" r="2" fill="none" stroke="#0b67c6" strokeWidth="1.500" /><path d="M9 8H12V10L9 13z" fill="#0b67c6" /></svg>
        <svg width="14" height="16" viewBox="0 0 14 16"><rect x="4" y="0" width="6" height="10" rx="3" fill="#0b67c6" /><path d="M1.500 7Q2 12 7 12Q12 12 12.500 7M7 12V15M4 15H10" stroke="#0b67c6" strokeWidth="1.500" fill="none" /></svg>
        <svg width="16" height="13" viewBox="0 0 16 13"><rect x="1" y="1" width="14" height="11" rx="1" fill="none" stroke="#0b67c6" strokeWidth="2" /><path d="M3 4.500H13M3 7H13M4 9.500H12" stroke="#0b67c6" strokeDasharray="2 1" /></svg>
        <svg width="16" height="14" viewBox="0 0 16 14"><path d="M5 0Q8 3 11 0L16 3L14 7L12 6V14H4V6L2 7L0 3z" fill="#0b67c6" /></svg>
        <svg width="14" height="14" viewBox="0 0 14 14"><rect width="6" height="6" rx="1.500" fill="#b09ac8" /><rect x="8.500" y=".8" width="5" height="5" rx="1.500" fill="none" stroke="#d79ad8" strokeWidth="1.500" /><rect y="8" width="6" height="6" rx="1.500" fill="#6d9ad0" /><rect x="8" y="8" width="6" height="6" rx="1.500" fill="#9a8fd4" /></svg>
      </Ime>
    </Screen>
  );
}
